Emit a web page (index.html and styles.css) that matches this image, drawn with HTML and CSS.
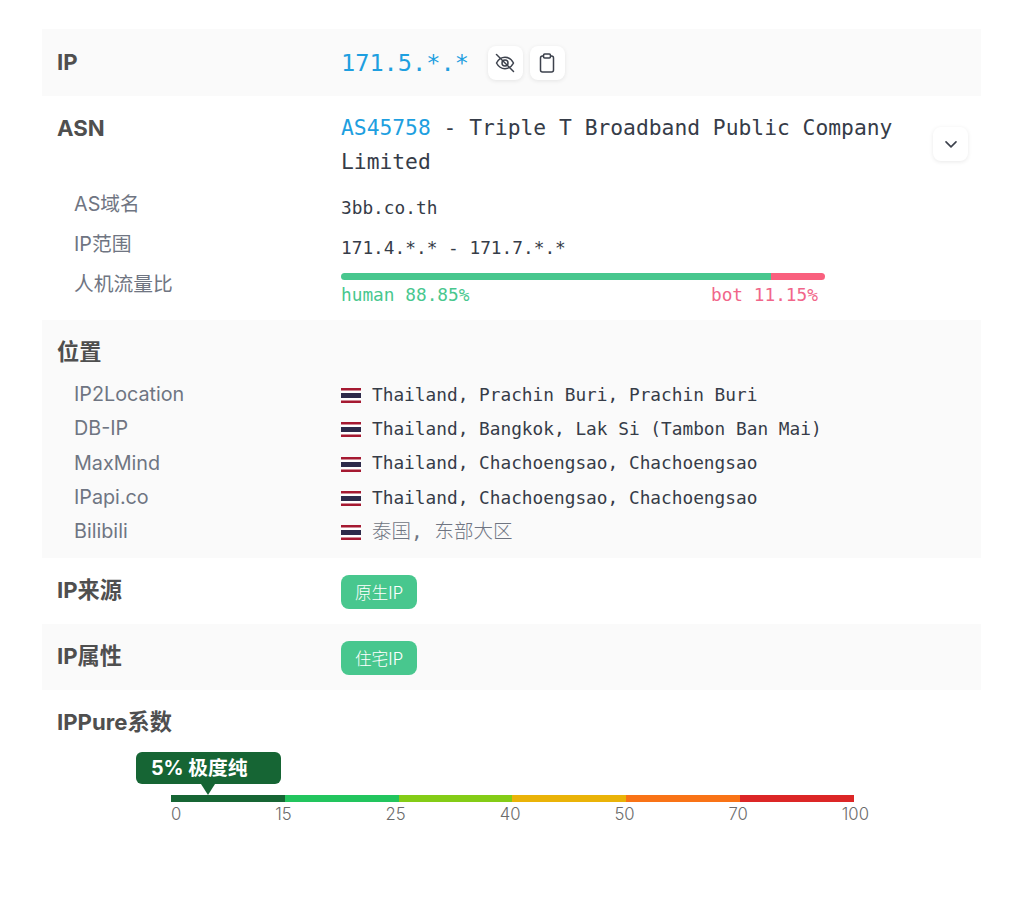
FILE: index.html
```html
<!DOCTYPE html>
<html lang="zh-CN">
<head>
<meta charset="utf-8">
<title>IP</title>
<link rel="stylesheet" href="styles.css">
</head>
<body>
<main class="table">
  <section class="row stripe row-ip">
    <div class="label">IP</div>
    <div class="value ip-value">
      <span class="ip-text">171.5.*.*</span>
      <button class="icon-btn" type="button" aria-label="hide">
        <svg viewBox="0 0 24 24" width="24" height="24" fill="none" stroke="#3d424d" stroke-width="1.500" stroke-linecap="round" stroke-linejoin="round"><path d="M3.500 12c2-3.800 5-5.700 8.500-5.700s6.500 1.900 8.500 5.700c-2 3.800-5 5.700-8.500 5.700s-6.500-1.900-8.500-5.700z"/><circle cx="12" cy="12" r="3"/><path d="M3.500 3.500l17 17"/></svg>
      </button>
      <button class="icon-btn" type="button" aria-label="copy">
        <svg viewBox="0 0 24 24" width="24" height="24" fill="none" stroke="#3d424d" stroke-width="1.500" stroke-linecap="round" stroke-linejoin="round"><path d="M8.500 5H7.500a2 2 0 0 0-2 2v12a2 2 0 0 0 2 2h9a2 2 0 0 0 2-2V7a2 2 0 0 0-2-2h-1"/><rect x="8.500" y="3" width="7" height="4" rx="1.200"/></svg>
      </button>
    </div>
  </section>

  <section class="block block-asn">
    <div class="row-asn">
      <div class="label">ASN</div>
      <div class="value asn-value"><a class="link">AS45758</a> - Triple T Broadband Public Company Limited</div>
      <button class="icon-btn expand" type="button" aria-label="expand">
        <svg viewBox="0 0 24 24" width="20" height="20" fill="none" stroke="#3d424d" stroke-width="2" stroke-linecap="round" stroke-linejoin="round"><path d="M6 9.500l6 6 6-6"/></svg>
      </button>
    </div>
    <div class="sub sub-domain"><div class="sub-label">AS域名</div><div class="sub-value">3bb.co.th</div></div>
    <div class="sub sub-range"><div class="sub-label">IP范围</div><div class="sub-value">171.4.*.* - 171.7.*.*</div></div>
    <div class="sub sub-traffic">
      <div class="sub-label">人机流量比</div>
      <div class="traffic">
        <div class="bar"><span class="bar-human"></span><span class="bar-bot"></span></div>
        <div class="legend"><span class="human">human 88.85%</span><span class="bot">bot 11.15%</span></div>
      </div>
    </div>
  </section>

  <section class="block stripe block-loc">
    <div class="label loc-title">位置</div>
    <div class="loc"><div class="sub-label">IP2Location</div><div class="loc-value"><svg class="flag" viewBox="0 0 20 15"><use href="#th"/></svg>Thailand, Prachin Buri, Prachin Buri</div></div>
    <div class="loc"><div class="sub-label">DB-IP</div><div class="loc-value"><svg class="flag" viewBox="0 0 20 15"><use href="#th"/></svg>Thailand, Bangkok, Lak Si (Tambon Ban Mai)</div></div>
    <div class="loc"><div class="sub-label">MaxMind</div><div class="loc-value"><svg class="flag" viewBox="0 0 20 15"><use href="#th"/></svg>Thailand, Chachoengsao, Chachoengsao</div></div>
    <div class="loc"><div class="sub-label">IPapi.co</div><div class="loc-value"><svg class="flag" viewBox="0 0 20 15"><use href="#th"/></svg>Thailand, Chachoengsao, Chachoengsao</div></div>
    <div class="loc"><div class="sub-label">Bilibili</div><div class="loc-value loc-cn"><svg class="flag" viewBox="0 0 20 15"><use href="#th"/></svg><span class="cn-text">泰国, 东部大区</span></div></div>
  </section>

  <section class="row">
    <div class="label">IP来源</div>
    <div class="value tag-value"><span class="tag">原生IP</span></div>
  </section>
  <section class="row stripe">
    <div class="label">IP属性</div>
    <div class="value tag-value"><span class="tag">住宅IP</span></div>
  </section>

  <section class="block block-pure">
    <div class="label">IPPure系数</div>
    <div class="scale">
      <div class="tip"><span class="tip-box">5% 极度纯</span><span class="tip-arrow"></span></div>
      <div class="segments"><i class="s1"></i><i class="s2"></i><i class="s3"></i><i class="s4"></i><i class="s5"></i><i class="s6"></i></div>
      <div class="ticks"><span>0</span><span>15</span><span>25</span><span>40</span><span>50</span><span>70</span><span>100</span></div>
    </div>
  </section>
</main>
<svg class="defs" width="0" height="0" aria-hidden="true">
  <symbol id="th" viewBox="0 0 20 15">
    <rect width="20" height="15" fill="#fff"/>
    <rect width="20" height="2.500" fill="#a51931"/>
    <rect y="12.500" width="20" height="2.500" fill="#a51931"/>
    <rect y="5" width="20" height="5" fill="#2d2a4a"/>
  </symbol>
</svg>
</body>
</html>
```
FILE: styles.css
```css
* { box-sizing: border-box; }
html, body { margin: 0; padding: 0; background: #fff; }
body { font-family: Inter, "Noto Sans CJK SC", sans-serif; color: #4a4a4a; }
.table { margin: 29px 43px 0 42px; }
.stripe { background: #fafafa; }
.label { font-size: 22.200px; font-weight: 700; line-height: 34px; color: #4f4f4f; width: 284px; flex: none; }
.row { display: flex; align-items: center; height: 66px; padding-left: 15px; }
.row > .label { margin-top: -2px; }
.row-ip { height: 67px; }
.value { font-family: "DejaVu Sans Mono", "Noto Sans CJK SC", monospace; color: #363c48; }
.tag-value { display: flex; padding-top: 2px; }
.ip-value { display: flex; align-items: center; gap: 7px; }
.ip-text { font-size: 23.600px; color: #1e9fe0; margin-right: 12px; }
.icon-btn { width: 35px; height: 34px; padding: 0; border: 0; border-radius: 8px; background: #fff; display: flex; align-items: center; justify-content: center; box-shadow: 0 1px 4px rgba(0,0,0,.09); flex: none; }
.block { padding-left: 15px; }
.block-asn { height: 224px; padding-top: 15px; }
.row-asn { display: flex; align-items: center; }
.row-asn .label { align-self: flex-start; }
.asn-value { font-size: 21.300px; line-height: 34px; width: 578px; flex: none; }
.link { color: #1e9fe0; }
.expand { margin-left: 14px; margin-top: -2px; }
.sub { display: flex; }
.sub-label { font-size: 19.750px; width: 284px; padding-left: 17px; color: #6f7582; flex: none; }
.sub-value { font-family: "DejaVu Sans Mono", monospace; font-size: 17.800px; color: #363c48; }
.sub-domain { margin-top: 8px; line-height: 34px; height: 40px; }
.sub-domain .sub-value { padding-top: 4px; }
.sub-range { line-height: 34px; height: 40px; }
.sub-range .sub-value { padding-top: 4px; }
.sub-traffic { line-height: 34px; }
.traffic { width: 484px; padding-top: 6px; }
.bar { display: flex; height: 7px; border-radius: 4px; overflow: hidden; }
.bar-human { width: 430px; background: #48c78e; }
.bar-bot { flex: 1; background: #f9607e; }
.legend { display: flex; justify-content: space-between; padding-right: 7px; font-family: "DejaVu Sans Mono", monospace; font-size: 17.800px; line-height: 30px; }
.human { color: #48c78e; }
.bot { color: #f1668a; }
.block-loc { height: 238px; padding-top: 15px; }
.loc-title { margin-bottom: 8px; }
.loc { display: flex; align-items: center; height: 34.300px; }
.loc .sub-label { line-height: 34px; }
.loc-value { display: flex; align-items: center; gap: 11px; font-family: "DejaVu Sans Mono", monospace; font-size: 17.800px; color: #363c48; white-space: nowrap; }
.loc-cn { font-family: "DejaVu Sans Mono", "Noto Sans CJK SC", monospace; font-size: 19.500px; color: #6f7582; font-weight: 300; }
.cn-text { margin-bottom: 3px; }
.flag { width: 20px; height: 15px; flex: none; margin-top: 3px; }
.defs { position: absolute; }
.tag { display: inline-flex; align-items: center; justify-content: center; width: 76px; height: 34px; border-radius: 8px; background: #48c78e; color: #fff; font-family: Inter, "Noto Sans CJK SC", sans-serif; font-size: 16.700px; font-weight: 300; }
.block-pure { padding-top: 15px; }
.scale { width: 698px; margin: 13px 0 0 114px; position: relative; }
.tip { position: relative; width: 145px; margin-left: -35px; height: 43px; }
.tip-box { display: block; height: 32px; line-height: 32px; padding-left: 15px; border-radius: 6px; background: #166534; color: #fff; font-size: 19.750px; font-weight: 700; white-space: nowrap; }
.tip-arrow { position: absolute; left: 65px; top: 32px; border-left: 7px solid transparent; border-right: 7px solid transparent; border-top: 11px solid #166534; }
.segments { display: flex; width: 683px; height: 7px; }
.segments i { flex: 1; }
.s1 { background: #166534; }
.s2 { background: #22c55e; }
.s3 { background: #84cc16; }
.s4 { background: #eab308; }
.s5 { background: #f97316; }
.s6 { background: #dc2626; }
.ticks { display: flex; justify-content: space-between; font-size: 16.700px; line-height: 20px; margin-top: 2px; color: #6b6b6b; font-weight: 300; }
```
